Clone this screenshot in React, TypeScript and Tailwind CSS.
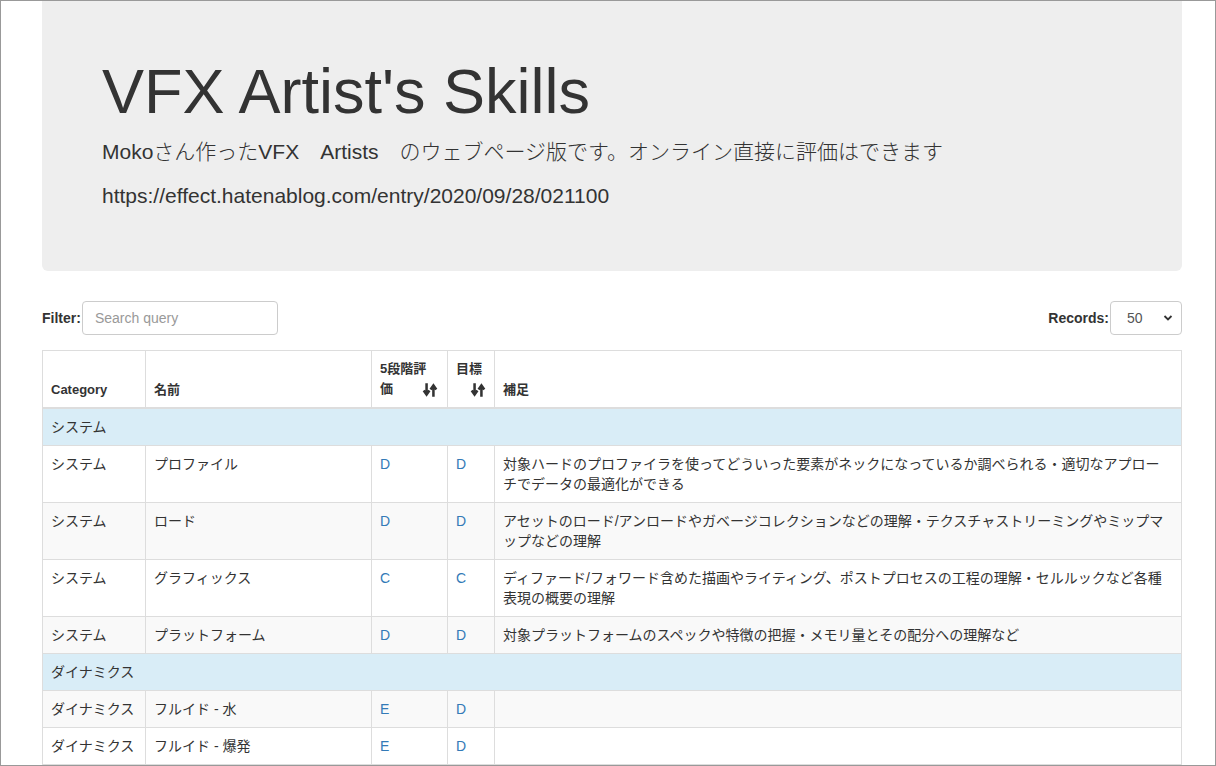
const font = { fontFamily: '"Liberation Sans", "Noto Sans CJK JP", sans-serif' };

type Row = { group?: string; cat?: string; name?: string; a?: string; b?: string; note?: string };

const rows: Row[] = [
  { group: 'システム' },
  { cat: 'システム', name: 'プロファイル', a: 'D', b: 'D', note: '対象ハードのプロファイラを使ってどういった要素がネックになっているか調べられる・適切なアプローチでデータの最適化ができる' },
  { cat: 'システム', name: 'ロード', a: 'D', b: 'D', note: 'アセットのロード/アンロードやガベージコレクションなどの理解・テクスチャストリーミングやミップマップなどの理解' },
  { cat: 'システム', name: 'グラフィックス', a: 'C', b: 'C', note: 'ディファード/フォワード含めた描画やライティング、ポストプロセスの工程の理解・セルルックなど各種表現の概要の理解' },
  { cat: 'システム', name: 'プラットフォーム', a: 'D', b: 'D', note: '対象プラットフォームのスペックや特徴の把握・メモリ量とその配分への理解など' },
  { group: 'ダイナミクス' },
  { cat: 'ダイナミクス', name: 'フルイド - 水', a: 'E', b: 'D', note: '' },
  { cat: 'ダイナミクス', name: 'フルイド - 爆発', a: 'E', b: 'D', note: '' },
];

const SortIcon = () => (
  <svg width="16" height="16" viewBox="0 0 14 14" className="inline-block">
    <path d="M4 1v9M1.5 7.5L4 11l2.5-3.5" stroke="#333" strokeWidth="2.2" fill="none" />
    <path d="M10 13V4M7.5 6.5L10 3l2.5 3.5" stroke="#333" strokeWidth="2.2" fill="none" />
  </svg>
);

const td = 'border border-[#ddd] px-2 py-2 align-top leading-[20px]';

export default function App() {
  return (
    <div style={font} className="h-[766px] overflow-hidden border border-[#999] bg-white text-[14px] text-[#333]">
      <div className="ml-[41px] mr-[33px] rounded-b-md bg-[#eee] px-[60px] pb-[46px] pt-[48px]">
        <h1 className="text-[63px] leading-[1.1] mt-[8px] mb-[10px]">VFX Artist's Skills</h1>
        <p className="text-[21px] font-light mb-[12px]">Mokoさん作ったVFX　Artists　のウェブページ版です。オンライン直接に評価はできます</p>
        <p className="text-[21px] pb-[14px]">https://effect.hatenablog.com/entry/2020/09/28/021100</p>
      </div>
      <div className="ml-[41px] mr-[33px] mt-[30px]">
        <div className="flex items-center justify-between mb-[15px]">
          <label className="flex items-center font-bold">
            Filter:
            <input placeholder="Search query" className="ml-[1px] h-[34px] w-[196px] rounded border border-[#ccc] px-3 text-[14px] font-normal placeholder:text-[#999]" />
          </label>
          <label className="flex items-center font-bold">
            Records:
            <span className="ml-[1px] flex h-[34px] w-[72px] items-center justify-between rounded border border-[#ccc] pl-4 pr-2 font-normal text-[#555]">
              50
              <svg width="10" height="8" viewBox="0 0 10 8"><path d="M1.5 2l3.5 3.5L8.5 2" stroke="#333" strokeWidth="1.8" fill="none" /></svg>
            </span>
          </label>
        </div>
        <table className="w-full border-collapse">
          <thead>
            <tr className="font-bold text-[13px]">
              <th className="border border-[#ddd] border-b-2 px-2 py-2 text-left align-bottom w-[103px]">Category</th>
              <th className="border border-[#ddd] border-b-2 px-2 py-2 text-left align-bottom w-[226px]">名前</th>
              <th className="border border-[#ddd] border-b-2 px-2 py-2 text-left align-bottom w-[76px] leading-[20px]">
                5段階評<br />価<span className="ml-[29px]"><SortIcon /></span>
              </th>
              <th className="border border-[#ddd] border-b-2 px-2 py-2 text-left align-bottom w-[47px] leading-[20px]">
                目標<br /><span className="ml-[14px]"><SortIcon /></span>
              </th>
              <th className="border border-[#ddd] border-b-2 px-2 py-2 text-left align-bottom">補足</th>
            </tr>
          </thead>
          <tbody>
            {rows.map((r, i) =>
              r.group ? (
                <tr key={i} className="bg-[#d9edf7]">
                  <td colSpan={5} className={td}>{r.group}</td>
                </tr>
              ) : (
                <tr key={i} className={i % 2 === 0 ? 'bg-[#f9f9f9]' : 'bg-white'}>
                  <td className={td}>{r.cat}</td>
                  <td className={td}>{r.name}</td>
                  <td className={`${td} text-[#337ab7]`}>{r.a}</td>
                  <td className={`${td} text-[#337ab7]`}>{r.b}</td>
                  <td className={td}>{r.note}</td>
                </tr>
              )
            )}
          </tbody>
        </table>
      </div>
    </div>
  );
}
